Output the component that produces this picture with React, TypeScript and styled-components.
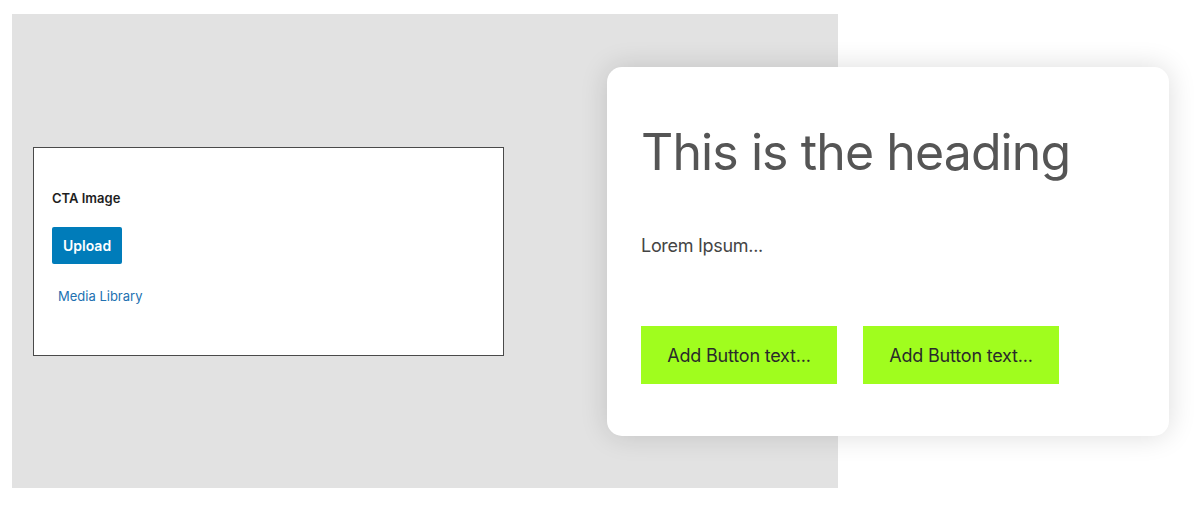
import styled, { createGlobalStyle } from "styled-components";

const GlobalStyle = createGlobalStyle`
  html, body {
    margin: 0;
    padding: 0;
    background: #ffffff;
    font-family: Inter, "Noto Sans", sans-serif;
  }
`;

const Page = styled.div`
  width: 1200px;
  height: 510px;
  padding: 14px 0 0 12px;
  box-sizing: border-box;
  display: flex;
  align-items: flex-start;
`;

const Backdrop = styled.div`
  width: 826px;
  height: 474px;
  flex-shrink: 0;
  background: #e2e2e2;
  display: flex;
  align-items: center;
  padding-left: 21px;
  box-sizing: border-box;
`;

const Placeholder = styled.div`
  width: 471px;
  height: 209px;
  box-sizing: border-box;
  background: #fff;
  border: 1px solid #4a4a4a;
  padding: 42px 18px 0;
  display: flex;
  flex-direction: column;
  align-items: flex-start;
`;

const Label = styled.div`
  font-size: 13px;
  font-weight: 600;
  color: #1e1e1e;
  line-height: 16px;
`;

const UploadButton = styled.button`
  margin-top: 21px;
  height: 37px;
  padding: 0 11px;
  border: none;
  border-radius: 2px;
  background: #007cba;
  color: #fff;
  font-family: inherit;
  font-size: 14px;
  font-weight: 600;
`;

const LinkButton = styled.button`
  margin-top: 23px;
  padding: 0 6px;
  border: none;
  background: none;
  color: #2271b1;
  font-family: inherit;
  font-size: 13px;
  line-height: 18px;
`;

const Card = styled.div`
  width: 562px;
  height: 369px;
  flex-shrink: 0;
  margin: 53px 0 0 -231px;
  box-sizing: border-box;
  background: #fff;
  border-radius: 15px;
  box-shadow: 0 0 28px rgba(0, 0, 0, 0.14);
  padding: 55px 34px 0;
  display: flex;
  flex-direction: column;
`;

const Heading = styled.h1`
  margin: 0;
  font-size: 50px;
  font-weight: 400;
  letter-spacing: -0.9px;
  line-height: 60px;
  color: #555;
`;

const Body = styled.p`
  margin: 53px 0 0;
  font-size: 18px;
  letter-spacing: -0.3px;
  line-height: 22px;
  color: #444;
`;

const Actions = styled.div`
  margin-top: 69px;
  display: flex;
  gap: 26px;
`;

const CtaButton = styled.div`
  width: 196px;
  height: 58px;
  background: #a0fd1e;
  color: #2a2a2a;
  font-size: 18px;
  letter-spacing: -0.2px;
  display: flex;
  align-items: center;
  justify-content: center;
`;

export default function App() {
  return (
    <>
      <GlobalStyle />
      <Page>
        <Backdrop>
          <Placeholder>
            <Label>CTA Image</Label>
            <UploadButton>Upload</UploadButton>
            <LinkButton>Media Library</LinkButton>
          </Placeholder>
        </Backdrop>
        <Card>
          <Heading>This is the heading</Heading>
          <Body>Lorem Ipsum...</Body>
          <Actions>
            <CtaButton>Add Button text...</CtaButton>
            <CtaButton>Add Button text...</CtaButton>
          </Actions>
        </Card>
      </Page>
    </>
  );
}
